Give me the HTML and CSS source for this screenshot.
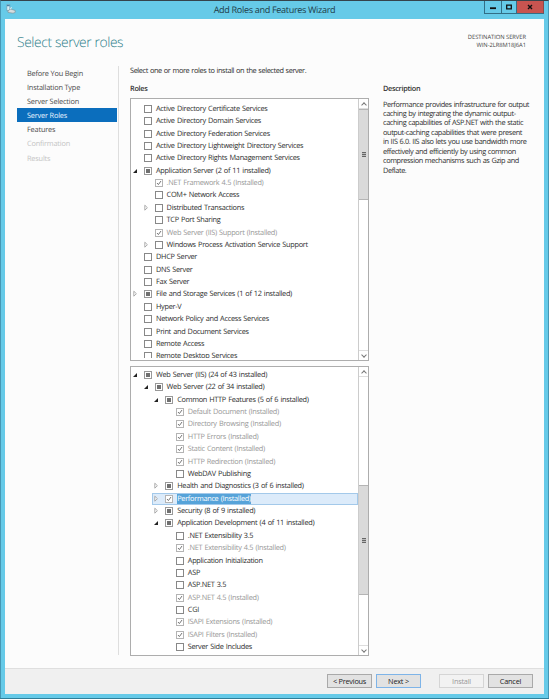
FILE: index.html
```
<!DOCTYPE html>
<html lang="en">
<head>
<meta charset="utf-8">
<title>Add Roles and Features Wizard</title>
<link rel="stylesheet" href="styles.css">
</head>
<body>
<div class="window">
  <header class="titlebar">
    <svg class="app-icon" viewBox="0 0 10 10"><path d="M.8.6h3v6h-3z" fill="#d8eef5" stroke="#5f93a8" stroke-width=".6"/><path d="M1 1.7h2.6" stroke="#2d6f9c"/><path d="M2 6.7 4.6 5 9.2 6.5v1.9L7 9.2 2 8.4z" fill="#d5dde0" stroke="#758b94" stroke-width=".6"/><path d="M4 4.5 6 3.6" stroke="#eee"/></svg>
    <h1 class="title">Add Roles and Features Wizard</h1>
    <div class="controls">
      <span class="ctl"><svg viewBox="0 0 8 8"><path d="M1 5.2h6" stroke="#111" stroke-width="1.8"/></svg></span>
      <span class="ctl"><svg viewBox="0 0 8 8"><path d="M1.7 2.2h4.6v3.6H1.7z" fill="none" stroke="#111" stroke-width="1.3"/></svg></span>
      <span class="ctl close"><svg viewBox="0 0 8 8"><path d="m2 2 4 4M6 2 2 6" stroke="#111" stroke-width="1.4"/></svg></span>
    </div>
  </header>
  <div class="client">
    <div class="heading">
      <h2>Select server roles</h2>
      <div class="dest">DESTINATION SERVER<br><span class="host">WIN-2LR8M18J6A1</span></div>
    </div>
    <div class="body">
      <nav class="steps">
        <a>Before You Begin</a><a>Installation Type</a><a>Server Selection</a><a class="active">Server Roles</a><a>Features</a><a class="off">Confirmation</a><a class="off">Results</a>
      </nav>
      <main class="main">
        <p class="intro">Select one or more roles to install on the selected server.</p>
        <div class="cols">
          <section class="roles">
            <h3>Roles</h3>
            <div class="list first"><div class="tree" id="top"></div><div class="bar"><i class="btn-up"></i><i class="thumb"></i><i class="btn-down"></i></div></div>
            <div class="list second"><div class="tree" id="bottom"></div><div class="bar"><i class="btn-up"></i><i class="thumb"></i><i class="btn-down"></i></div></div>
          </section>
          <section class="desc">
            <h3>Description</h3>
            <p>Performance provides infrastructure for output<br>caching by integrating the dynamic output-<br>caching capabilities of ASP.NET with the static<br>output-caching capabilities that were present<br>in IIS 6.0. IIS also lets you use bandwidth more<br>effectively and efficiently by using common<br>compression mechanisms such as Gzip and<br>Deflate.</p>
          </section>
        </div>
      </main>
    </div>
    <footer class="footer">
      <button>&lt; Previous</button><button class="next">Next &gt;</button><button class="install">Install</button><button>Cancel</button>
    </footer>
  </div>
</div>
<script src="tree.js"></script>
</body>
</html>
```
FILE: styles.css
```
* { box-sizing: border-box; }
body { margin: 0; width: 549px; height: 699px; overflow: hidden; background: #2f7f9a; font-family: "Open Sans", "Noto Sans", sans-serif; font-size: 7.35px; letter-spacing: -.28px; text-rendering: geometricPrecision; color: #2e2e2e; }
h1, h2, h3, p { margin: 0; font-weight: 400; }
.window { width: 549px; height: 698px; background: #66cae8; border-top: 1px solid #35434b; border-left: 1px solid #4797b4; border-right: 1px solid #4797b4; padding: 0 4px; display: flex; flex-direction: column; }
.titlebar { height: 18px; flex: none; display: grid; grid-template-columns: 60px 1fr 60px; align-items: start; }
.app-icon { width: 10px; height: 10px; margin: 3px 0 0 1px; }
.title { font-size: 9.1px; letter-spacing: -.34px; line-height: 18px; text-align: center; color: #1f3d49; white-space: nowrap; }
.controls { display: flex; justify-content: flex-end; height: 13px; }
.ctl { width: 17px; height: 13px; border: 1px solid #326e86; border-top: 0; border-right: 0; display: flex; align-items: center; justify-content: center; flex: none; }
.ctl:nth-child(2) { width: 15px; }
.ctl svg { width: 8px; height: 8px; }
.close { width: 28px; background: #c75450; border-right: 1px solid #8c4a4b; }
.client { flex: none; height: 675px; background: #fcfcfc; display: flex; flex-direction: column; }
.heading { height: 47px; flex: none; display: flex; justify-content: space-between; padding: 14px 18px 0 12px; }
h2 { font-size: 13.8px; letter-spacing: -.38px; font-weight: 300; line-height: 20px; color: #2f7f8b; white-space: nowrap; }
.dest { text-align: right; font-size: 5.8px; letter-spacing: -.04px; line-height: 7.5px; padding-top: 1px; color: #444; white-space: nowrap; }
.body { height: 602px; flex: none; display: flex; padding-left: 12px; }
.steps { width: 102px; height: 589px; border-right: 1px solid #dedede; flex: none; letter-spacing: -.18px; }
.steps a { display: block; height: 14.1px; line-height: 14px; padding: 1px 0 0 10px; width: 100px; white-space: nowrap; color: #4c4c4c; }
.steps .active { background: #0b6ebd; color: #e8f4ff; }
.steps .off { color: #c4c4c4; }
.main { padding-left: 11px; flex: 1; }
.intro { line-height: 11px; height: 9px; white-space: nowrap; letter-spacing: -.39px; word-spacing: .5px; }
.cols { display: flex; padding-top: 8px; }
h3 { font-size: 7.3px; line-height: 12px; height: 10px; font-weight: 600; color: #333; }
.roles { width: 239px; flex: none; }
.list { background: #fff; border: 1px solid #adadad; display: flex; overflow: hidden; }
.first { height: 263px; margin-top: 5px; }
.second { height: 290px; margin-top: 5px; }
.tree { flex: 1; overflow: hidden; letter-spacing: -.29px; word-spacing: .6px; }
.first .tree { height: 259px; padding-top: 3.6px; }
.second .tree { padding-top: 1.8px; }
.row { height: 12.38px; display: flex; align-items: center; white-space: nowrap; padding-left: 1px; }
.lv1 { padding-left: 11.6px; } .lv2 { padding-left: 22.2px; } .lv3 { padding-left: 32.8px; }
.arrow { width: 12px; height: 8px; flex: none; }
.box { width: 8px; height: 8px; border: 1px solid #888; background: #fff; margin-right: 4px; flex: none; }
.box svg { display: block; width: 6px; height: 6px; }
.part { padding: 1px; border-color: #999; }
.part::before { content: ""; display: block; height: 4px; background: #707070; }
.done { border-color: #b4b4b4; }
.dim .label { color: #989898; }
.selected { margin-left: 21px; padding-left: 0; background: #dcebfa; border: 1px solid #a3c9ea; }
.selected .arrow { margin-left: 0.2px; }
.selected .label { background: #56a3d9; color: #fff; line-height: 10px; }
.bar { width: 10px; flex: none; border-left: 1px solid #ccc; display: flex; flex-direction: column; background: #fff; }
.bar i { flex: none; display: flex; align-items: center; justify-content: center; }
.btn-up, .btn-down { height: 10px; border: 1px solid #ddd; border-width: 0 0 1px; }
.btn-down { margin-top: auto; border-width: 1px 0 0; }
.btn-up::before, .btn-down::before { content: ""; width: 3px; height: 3px; border: solid #777; border-width: 1px 0 0 1px; transform: translateY(1px) rotate(45deg); }
.btn-down::before { transform: translateY(-1px) rotate(225deg); }
.thumb { height: 91px; background: #dadada; border: 1px solid #b5b5b5; border-left: 0; border-right: 0; }
.thumb::before { content: ""; width: 4px; height: 5px; background: repeating-linear-gradient(#666 0 1px, #bbb 1px 2px); }
.second .thumb { margin-top: 108px; height: 110px; }
.desc { padding-left: 14px; }
.desc p { margin-top: 7.5px; line-height: 9.45px; white-space: nowrap; letter-spacing: -.39px; word-spacing: .5px; }
.footer { height: 26px; flex: none; background: #f0f0f0; border-top: 1px solid #dfdfdf; display: flex; justify-content: flex-end; padding: 5px 11px 0 0; }
button { width: 45px; height: 14px; margin-left: 4px; padding: 0; border: 1px solid #a9a9a9; background: #e2e2e2; font: inherit; letter-spacing: -.24px; line-height: 12px; color: #222; }
.next { border-color: #7eb4e8; }
.install { margin-left: 18px; border-color: #d5d5d5; background: #f2f2f2; color: #999; }
```
FILE: tree.js
```
// Row format: level, arrow (o = open, c = closed, - = none), box (e = empty, p = partial, d = done, s = selected), label
const top_ = [
  [0,'-','e','Active Directory Certificate Services'],[0,'-','e','Active Directory Domain Services'],[0,'-','e','Active Directory Federation Services'],[0,'-','e','Active Directory Lightweight Directory Services'],[0,'-','e','Active Directory Rights Management Services'],
  [0,'o','p','Application Server (2 of 11 installed)'],[1,'-','d','.NET Framework 4.5 (Installed)'],[1,'-','e','COM+ Network Access'],[1,'c','e','Distributed Transactions'],[1,'-','e','TCP Port Sharing'],[1,'-','d','Web Server (IIS) Support (Installed)'],[1,'c','e','Windows Process Activation Service Support'],
  [0,'-','e','DHCP Server'],[0,'-','e','DNS Server'],[0,'-','e','Fax Server'],[0,'c','p','File and Storage Services (1 of 12 installed)'],[0,'-','e','Hyper-V'],[0,'-','e','Network Policy and Access Services'],[0,'-','e','Print and Document Services'],[0,'-','e','Remote Access'],[0,'-','e','Remote Desktop Services']
];
const bottom = [
  [0,'o','p','Web Server (IIS) (24 of 43 installed)'],[1,'o','p','Web Server (22 of 34 installed)'],[2,'o','p','Common HTTP Features (5 of 6 installed)'],[3,'-','d','Default Document (Installed)'],[3,'-','d','Directory Browsing (Installed)'],[3,'-','d','HTTP Errors (Installed)'],[3,'-','d','Static Content (Installed)'],[3,'-','d','HTTP Redirection (Installed)'],[3,'-','e','WebDAV Publishing'],
  [2,'c','p','Health and Diagnostics (3 of 6 installed)'],[2,'c','s','Performance (Installed)'],[2,'c','p','Security (8 of 9 installed)'],[2,'o','p','Application Development (4 of 11 installed)'],
  [3,'-','e','.NET Extensibility 3.5'],[3,'-','d','.NET Extensibility 4.5 (Installed)'],[3,'-','e','Application Initialization'],[3,'-','e','ASP'],[3,'-','e','ASP.NET 3.5'],[3,'-','d','ASP.NET 4.5 (Installed)'],[3,'-','e','CGI'],[3,'-','d','ISAPI Extensions (Installed)'],[3,'-','d','ISAPI Filters (Installed)'],[3,'-','e','Server Side Includes']
];
const arrows = {
  o: '<path d="M5 2v4H1z" fill="#222"/>',
  c: '<path d="M1.8 1.2v5L4.4 3.7z" fill="#fff" stroke="#999" stroke-width=".8"/>',
  '-': ''
};
const tick = '<svg viewBox="0 0 6 6"><path d="m1 3 1.4 1.6L5 1" fill="none" stroke="#777" stroke-width="1"/></svg>';
function fill(id, rows) {
  document.getElementById(id).innerHTML = rows.map(([lv, a, b, text]) => {
    const done = b === 'd' || b === 's';
    return `<div class="row lv${lv}${b === 'd' ? ' dim' : ''}${b === 's' ? ' selected' : ''}"><svg class="arrow" viewBox="0 0 12 8">${arrows[a]}</svg><span class="box${b === 'p' ? ' part' : ''}${done ? ' done' : ''}">${done ? tick : ''}</span><span class="label">${text}</span></div>`;
  }).join('');
}
fill('top', top_);
fill('bottom', bottom);
```
